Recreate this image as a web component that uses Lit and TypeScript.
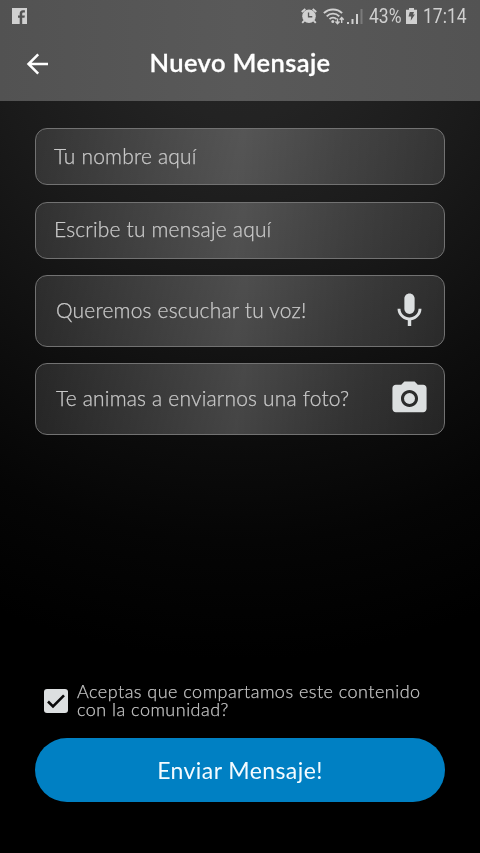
import { LitElement, html, css, svg } from "lit";
import { customElement, property } from "lit/decorators.js";

@customElement("status-bar")
class StatusBar extends LitElement {
  static styles = css`
    :host {
      display: flex;
      align-items: center;
      height: 32px;
      padding: 0 13px 0 12px;
      color: #d0d0d0;
      font: 400 20px/32px Roboto, sans-serif;
      will-change: transform;
    }
    svg { display: block; flex: none; }
    .gap { flex: 1; }
    .alarm { margin-right: 6px; }
    .signal { margin: 0 5px 0 2px; }
    .cell { margin: 0 6px 0 5px; }
    .txt { display: block; white-space: nowrap; }
    .pct, .time { transform-origin: 0 50%; transform: scaleX(0.875); }
    .pct { width: 32px; }
    .time { width: 44px; }
  `;
  render() {
    return html`
      <svg width="15" height="16" viewBox="0 0 15 16">
        <path fill="currentColor" d="M0 0h15v16h-4.800V9.700h2.300l.4-2.200h-2.700V6c0-.9.4-1.400 1.400-1.400h1.300V2.300h-1.900C8.800 2.300 7.700 3.600 7.700 5.800v1.700H6v2.200h1.700V16H0z"/>
      </svg>
      <span class="gap"></span>
      <svg class="alarm" width="16" height="16" viewBox="0 0 17 17">
        <g stroke="currentColor" stroke-width="2" fill="none">
          <path d="M.8 4.200 4.600 1M16.200 4.200 12.400 1M3.500 13.500 1.300 15.900M13.500 13.500l2.200 2.400"/>
        </g>
        <circle cx="8.500" cy="8.700" r="7.200" fill="currentColor"/>
        <path d="M8 4.700v4.600h4" fill="none" stroke="#575757" stroke-width="1.400"/>
      </svg>
      <svg width="22" height="17" viewBox="0 0 22 17">
        <g fill="none" stroke="currentColor" stroke-width="1.900">
          <path d="M.9 5.200C5.800.2 14.200.2 19.100 5.200"/>
          <path d="M3.700 8.300c3.500-3.600 9.100-3.600 12.600 0"/>
          <path d="M6.500 11.100c2-2 5-2 7 0"/>
        </g>
        <circle cx="9.800" cy="13.400" r="1.500" fill="currentColor"/>
        <g fill="none" stroke="currentColor" stroke-width="1.400">
          <path d="M14.500 10.500v5M12.500 13.500l2 2.200 2-2.200M18.700 15V9.500M16.700 11.700l2-2.200 2 2.200"/>
        </g>
      </svg>
      <svg class="signal" width="17" height="17" viewBox="0 0 17 17">
        <g fill="currentColor">
          <path d="M0 14h2v2H0zM4.500 11h2v5h-2zM9 6h2v10H9z"/>
          <path opacity=".3" d="M13.500 1h2v15h-2z"/>
        </g>
      </svg>
      <span class="txt pct">43%</span>
      <svg class="cell" width="11" height="16" viewBox="0 0 11 16">
        <path fill="currentColor" d="M3 0h5v1.700h3V16H0V1.700h3z"/>
        <path fill="#575757" d="M3.800 4h4.200l-1 2.600h1.900L4.700 12.800l.5-4.200H2.500z"/>
      </svg>
      <span class="txt time">17:14</span>
    `;
  }
}

const icons = {
  mic: svg`<path d="M12 14c1.660 0 2.990-1.340 2.990-3L15 5c0-1.660-1.340-3-3-3S9 3.340 9 5v6c0 1.660 1.340 3 3 3zm5.300-3c0 3-2.540 5.100-5.300 5.100S6.700 14 6.700 11H5c0 3.410 2.720 6.230 6 6.720V21h2v-3.280c3.280-.48 6-3.300 6-6.720h-1.700z"/>`,
  camera: svg`<circle cx="12" cy="12" r="3.200"/><path d="M9 2 7.170 4H4c-1.100 0-2 .9-2 2v12c0 1.100.9 2 2 2h16c1.100 0 2-.9 2-2V6c0-1.100-.9-2-2-2h-3.170L15 2H9zm3 15c-2.760 0-5-2.240-5-5s2.240-5 5-5 5 2.240 5 5-2.240 5-5 5z"/>`,
};

@customElement("form-field")
class FormField extends LitElement {
  @property() label = "";
  @property() icon: "" | "mic" | "camera" = "";
  static styles = css`
    :host {
      display: flex;
      align-items: center;
      justify-content: space-between;
      box-sizing: border-box;
      height: 57px;
      padding: 0 14px 0 17.500px;
      border: 1px solid #727272;
      border-radius: 12px;
      background: linear-gradient(98deg, rgba(255,255,255,.11), rgba(255,255,255,.17) 25%, rgba(255,255,255,.23) 50%, rgba(255,255,255,.16) 75%, rgba(255,255,255,.11));
      color: #c8c8c8;
      font: 300 21px/26px Lato, sans-serif;
    }
    :host([icon]) { height: 72px; padding-left: 20px; }
    .label {
      margin-top: -2px;
      white-space: nowrap;
      letter-spacing: .18px;
      -webkit-text-stroke: .25px currentColor;
      will-change: transform;
    }
    svg { fill: #dcdfe0; display: block; margin-top: -1px; }
  `;
  render() {
    return html`<span class="label">${this.label}</span>
      ${this.icon
        ? html`<svg width="41" height="41" viewBox="0 0 24 24">${icons[this.icon]}</svg>`
        : null}`;
  }
}

@customElement("app-root")
class AppRoot extends LitElement {
  static styles = css`
    :host {
      display: flex;
      flex-direction: column;
      box-sizing: border-box;
      height: 853px;
      overflow: hidden;
      background: radial-gradient(ellipse 640px 660px at 50% 0, #262626 0, #232323 18%, #1a1a1a 40%, #0e0e0e 63%, #050505 82%, #000 100%) #000;
      font-family: Lato, sans-serif;
    }
    header { height: 101px; background: linear-gradient(90deg, #525252, #595959 50%, #535353); }
    .bar { display: grid; grid-template-columns: 75px 1fr 75px; align-items: center; height: 62px; }
    .bar svg { margin: 2px 0 0 26px; }
    h1 { margin: -2px 0 0; color: #fff; font: 600 25.500px/32px Lato, sans-serif; letter-spacing: .4px; text-align: center; white-space: nowrap; -webkit-text-stroke: .3px currentColor; will-change: transform; }
    .fields { display: grid; gap: 16.500px; padding: 27px 35px 0; }
    .fields form-field:last-child { margin-top: -.5px; }
    footer { margin-top: auto; padding: 0 35px 51px; }
    .consent { display: flex; align-items: center; gap: 9px; margin: 0 0 20px 9px; color: #c4c4c4; font: 300 18px/18px Lato, sans-serif; letter-spacing: .48px; -webkit-text-stroke: .25px currentColor; will-change: transform; }
    .terms { margin-top: -2px; }
    .line { display: block; white-space: nowrap; }
    .box { display: grid; place-items: center; width: 24px; height: 24px; border-radius: 3px; background: #dcdfe0; }
    button { display: block; width: 100%; height: 64px; padding: 0; border: 0; border-radius: 32px; background: #0080c3; color: #f4fbff; font: 400 23px/30px Lato, sans-serif; letter-spacing: .42px; will-change: transform; }
  `;
  render() {
    return html`
      <header>
        <status-bar></status-bar>
        <div class="bar">
          <svg width="23" height="22" viewBox="0 0 23 22" fill="none" stroke="#fff" stroke-width="2.500"><path d="M22 11H3M12.200 1.300 2.500 11l9.700 9.700"/></svg>
          <h1>Nuevo Mensaje</h1>
        </div>
      </header>
      <div class="fields">
        <form-field label="Tu nombre aquí"></form-field>
        <form-field label="Escribe tu mensaje aquí"></form-field>
        <form-field icon="mic" label="Queremos escuchar tu voz!"></form-field>
        <form-field icon="camera" label="Te animas a enviarnos una foto?"></form-field>
      </div>
      <footer>
        <div class="consent">
          <span class="box"><svg width="20" height="18" viewBox="0 0 20 18" fill="none" stroke="#0a0a0a" stroke-width="2.600"><path d="m2 9.500 5 5L18 3.300"/></svg></span>
          <div class="terms"><span class="line">Aceptas que compartamos este contenido</span><span class="line">con la comunidad?</span></div>
        </div>
        <button>Enviar Mensaje!</button>
      </footer>
    `;
  }
}
